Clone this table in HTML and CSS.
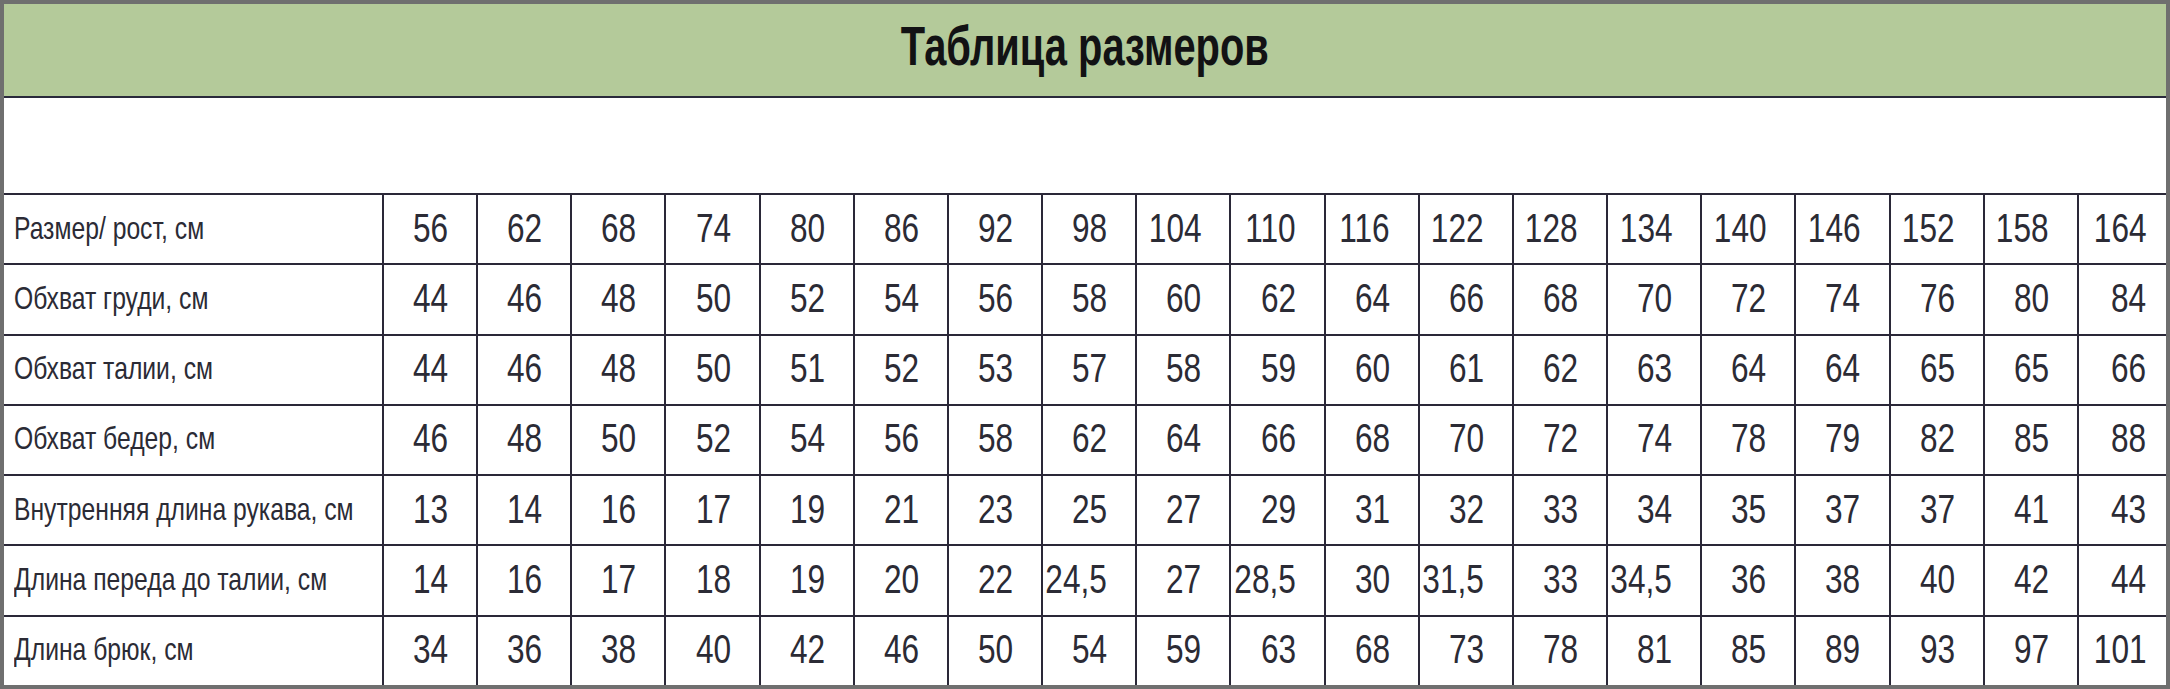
FILE: index.html
```html
<!DOCTYPE html>
<html lang="ru">
<head>
<meta charset="utf-8">
<title>Таблица размеров</title>
<link rel="stylesheet" href="styles.css">
</head>
<body>
<div class="frame">
  <header class="band"><h1 class="title"><span class="t">Таблица размеров</span></h1></header>
  <div class="gap"></div>
  <div class="grid">
    <div class="cell label"><span class="t">Размер/ рост, см</span></div>
    <div class="cell num"><span class="t">56</span></div><div class="cell num"><span class="t">62</span></div><div class="cell num"><span class="t">68</span></div><div class="cell num"><span class="t">74</span></div><div class="cell num"><span class="t">80</span></div><div class="cell num"><span class="t">86</span></div><div class="cell num"><span class="t">92</span></div><div class="cell num"><span class="t">98</span></div><div class="cell num"><span class="t">104</span></div><div class="cell num"><span class="t">110</span></div><div class="cell num"><span class="t">116</span></div><div class="cell num"><span class="t">122</span></div><div class="cell num"><span class="t">128</span></div><div class="cell num"><span class="t">134</span></div><div class="cell num"><span class="t">140</span></div><div class="cell num"><span class="t">146</span></div><div class="cell num"><span class="t">152</span></div><div class="cell num"><span class="t">158</span></div><div class="cell num"><span class="t">164</span></div>

    <div class="cell label"><span class="t">Обхват груди, см</span></div>
    <div class="cell num"><span class="t">44</span></div><div class="cell num"><span class="t">46</span></div><div class="cell num"><span class="t">48</span></div><div class="cell num"><span class="t">50</span></div><div class="cell num"><span class="t">52</span></div><div class="cell num"><span class="t">54</span></div><div class="cell num"><span class="t">56</span></div><div class="cell num"><span class="t">58</span></div><div class="cell num"><span class="t">60</span></div><div class="cell num"><span class="t">62</span></div><div class="cell num"><span class="t">64</span></div><div class="cell num"><span class="t">66</span></div><div class="cell num"><span class="t">68</span></div><div class="cell num"><span class="t">70</span></div><div class="cell num"><span class="t">72</span></div><div class="cell num"><span class="t">74</span></div><div class="cell num"><span class="t">76</span></div><div class="cell num"><span class="t">80</span></div><div class="cell num"><span class="t">84</span></div>

    <div class="cell label"><span class="t">Обхват талии, см</span></div>
    <div class="cell num"><span class="t">44</span></div><div class="cell num"><span class="t">46</span></div><div class="cell num"><span class="t">48</span></div><div class="cell num"><span class="t">50</span></div><div class="cell num"><span class="t">51</span></div><div class="cell num"><span class="t">52</span></div><div class="cell num"><span class="t">53</span></div><div class="cell num"><span class="t">57</span></div><div class="cell num"><span class="t">58</span></div><div class="cell num"><span class="t">59</span></div><div class="cell num"><span class="t">60</span></div><div class="cell num"><span class="t">61</span></div><div class="cell num"><span class="t">62</span></div><div class="cell num"><span class="t">63</span></div><div class="cell num"><span class="t">64</span></div><div class="cell num"><span class="t">64</span></div><div class="cell num"><span class="t">65</span></div><div class="cell num"><span class="t">65</span></div><div class="cell num"><span class="t">66</span></div>

    <div class="cell label"><span class="t">Обхват бедер, см</span></div>
    <div class="cell num"><span class="t">46</span></div><div class="cell num"><span class="t">48</span></div><div class="cell num"><span class="t">50</span></div><div class="cell num"><span class="t">52</span></div><div class="cell num"><span class="t">54</span></div><div class="cell num"><span class="t">56</span></div><div class="cell num"><span class="t">58</span></div><div class="cell num"><span class="t">62</span></div><div class="cell num"><span class="t">64</span></div><div class="cell num"><span class="t">66</span></div><div class="cell num"><span class="t">68</span></div><div class="cell num"><span class="t">70</span></div><div class="cell num"><span class="t">72</span></div><div class="cell num"><span class="t">74</span></div><div class="cell num"><span class="t">78</span></div><div class="cell num"><span class="t">79</span></div><div class="cell num"><span class="t">82</span></div><div class="cell num"><span class="t">85</span></div><div class="cell num"><span class="t">88</span></div>

    <div class="cell label"><span class="t">Внутренняя длина рукава, см</span></div>
    <div class="cell num"><span class="t">13</span></div><div class="cell num"><span class="t">14</span></div><div class="cell num"><span class="t">16</span></div><div class="cell num"><span class="t">17</span></div><div class="cell num"><span class="t">19</span></div><div class="cell num"><span class="t">21</span></div><div class="cell num"><span class="t">23</span></div><div class="cell num"><span class="t">25</span></div><div class="cell num"><span class="t">27</span></div><div class="cell num"><span class="t">29</span></div><div class="cell num"><span class="t">31</span></div><div class="cell num"><span class="t">32</span></div><div class="cell num"><span class="t">33</span></div><div class="cell num"><span class="t">34</span></div><div class="cell num"><span class="t">35</span></div><div class="cell num"><span class="t">37</span></div><div class="cell num"><span class="t">37</span></div><div class="cell num"><span class="t">41</span></div><div class="cell num"><span class="t">43</span></div>

    <div class="cell label"><span class="t">Длина переда до талии, см</span></div>
    <div class="cell num"><span class="t">14</span></div><div class="cell num"><span class="t">16</span></div><div class="cell num"><span class="t">17</span></div><div class="cell num"><span class="t">18</span></div><div class="cell num"><span class="t">19</span></div><div class="cell num"><span class="t">20</span></div><div class="cell num"><span class="t">22</span></div><div class="cell num"><span class="t">24,5</span></div><div class="cell num"><span class="t">27</span></div><div class="cell num"><span class="t">28,5</span></div><div class="cell num"><span class="t">30</span></div><div class="cell num"><span class="t">31,5</span></div><div class="cell num"><span class="t">33</span></div><div class="cell num"><span class="t">34,5</span></div><div class="cell num"><span class="t">36</span></div><div class="cell num"><span class="t">38</span></div><div class="cell num"><span class="t">40</span></div><div class="cell num"><span class="t">42</span></div><div class="cell num"><span class="t">44</span></div>

    <div class="cell label"><span class="t">Длина брюк, см</span></div>
    <div class="cell num"><span class="t">34</span></div><div class="cell num"><span class="t">36</span></div><div class="cell num"><span class="t">38</span></div><div class="cell num"><span class="t">40</span></div><div class="cell num"><span class="t">42</span></div><div class="cell num"><span class="t">46</span></div><div class="cell num"><span class="t">50</span></div><div class="cell num"><span class="t">54</span></div><div class="cell num"><span class="t">59</span></div><div class="cell num"><span class="t">63</span></div><div class="cell num"><span class="t">68</span></div><div class="cell num"><span class="t">73</span></div><div class="cell num"><span class="t">78</span></div><div class="cell num"><span class="t">81</span></div><div class="cell num"><span class="t">85</span></div><div class="cell num"><span class="t">89</span></div><div class="cell num"><span class="t">93</span></div><div class="cell num"><span class="t">97</span></div><div class="cell num"><span class="t">101</span></div>
  </div>
</div>
</body>
</html>
```
FILE: styles.css
```css
html, body {
  margin: 0;
  padding: 0;
  background: #6f6f6f;
}
.frame {
  width: 2162px;
  height: 681px;
  margin: 4px;
  background: #ffffff;
  display: flex;
  flex-direction: column;
  overflow: hidden;
}
.band {
  height: 92px;
  background: #b4ca9a;
  border-bottom: 2px solid #2a2a3c;
  display: flex;
  justify-content: center;
}
.title {
  margin: 0;
  font-family: "Liberation Sans", Arial, sans-serif;
  font-weight: 700;
  font-size: 55px;
  line-height: 1;
  color: #121214;
  padding-top: 15px;
}
.title .t {
  transform: scaleX(0.725);
  transform-origin: center center;
}
.gap {
  height: 95px;
}
.grid {
  flex: 1;
  display: grid;
  grid-template-columns: 378px repeat(18, 94.17px) 1fr;
  grid-template-rows: repeat(7, 1fr);
}
.cell {
  border-top: 2px solid #2a2838;
  display: flex;
  align-items: center;
  color: #2b2b35;
  font-family: "Liberation Sans", Arial, sans-serif;
  white-space: nowrap;
  box-sizing: border-box;
}
.t {
  display: inline-block;
}
.label {
  font-size: 30.5px;
  padding-left: 10px;
  padding-bottom: 2px;
}
.label .t {
  transform: scaleX(0.81);
  transform-origin: left center;
}
.num {
  border-left: 2px solid #2a2838;
  justify-content: flex-end;
  padding-right: 28px;
  padding-bottom: 2px;
  font-size: 40.5px;
}
.num .t {
  transform: scaleX(0.78);
  transform-origin: right center;
}
```
